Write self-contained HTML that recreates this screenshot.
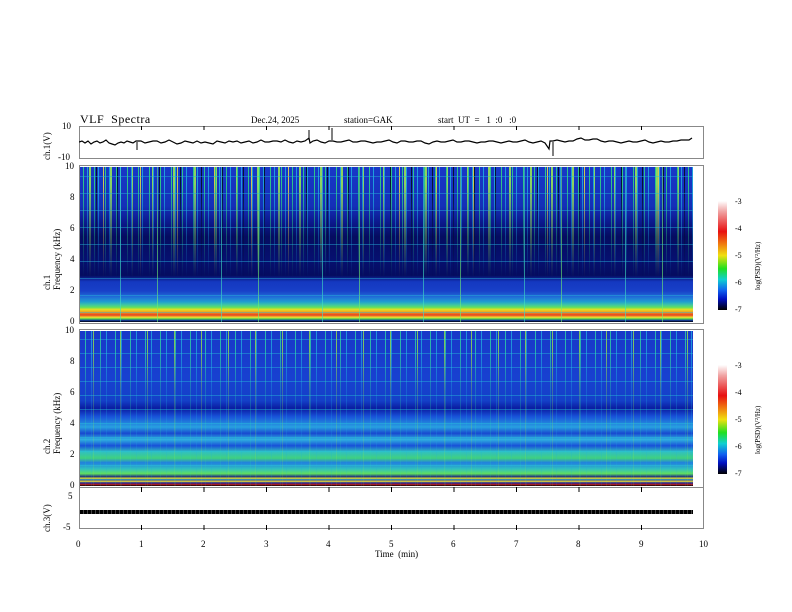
<!DOCTYPE html>
<html><head><meta charset="utf-8"><style>
body{margin:0;width:792px;height:612px;background:#fff;position:relative;overflow:hidden;font-family:"Liberation Serif",serif;color:#000}
.t{position:absolute;font-size:9px;white-space:nowrap}
.frame{position:absolute;left:79px;width:625px;border:1px solid #888;box-sizing:border-box}
.sp{position:absolute;left:80px;width:613px}
.cb{position:absolute;left:718px;width:9px}
</style></head><body>
<div class="t" style="left:80px;top:112px;font-size:12px;letter-spacing:.5px">VLF&nbsp; Spectra</div>
<div class="t" style="left:251px;top:115px">Dec.24, 2025</div>
<div class="t" style="left:344px;top:115px">station=GAK</div>
<div class="t" style="left:438px;top:115px">start&nbsp; UT&nbsp; =&nbsp;&nbsp; 1&nbsp; :0&nbsp;&nbsp; :0</div>

<!-- ch1 -->
<div class="frame" style="top:126px;height:33px"></div>
<div class="t" style="left:62px;top:121px">10</div>
<div class="t" style="left:58px;top:152px">-10</div>
<div class="t" style="left:42px;top:160px;transform:rotate(-90deg);transform-origin:0 0">ch.1(V)</div>
<svg style="position:absolute;left:79px;top:126px" width="626" height="34">
<polyline fill="none" stroke="#000" stroke-width="1.2" points="0,16 3,15 6,17 9,15 12,18 15,16 18,15 21,17 24,16 27,14 30,17 33,18 36,19 39,17 42,16 45,17 48,15 51,16 54,17 57,15 62,15 66,17 70,16 74,15 78,15 82,17 86,16 90,14 94,16 98,18 102,17 106,15 110,16 114,17 118,15 122,17 126,16 130,17 134,18 138,15 142,16 146,17 150,15 154,16 158,15 162,17 166,16 170,15 174,17 178,16 182,14 186,16 190,16 194,15 198,15 202,16 206,14 210,16 214,17 218,15 222,16 226,15 230,12 231,17 234,15 238,14 242,16 246,17 250,15 254,15 258,16 262,16 266,15 270,14 274,16 278,16 282,15 286,15 290,16 294,17 298,16 302,16 306,15 310,14 314,16 318,17 322,15 326,15 330,16 334,16 338,15 342,15 346,17 350,18 354,16 358,15 362,16 366,16 370,15 374,14 378,16 382,16 386,15 390,15 394,16 398,17 402,16 406,16 410,15 414,15 418,16 422,17 426,16 430,15 434,16 438,16 442,15 446,14 450,16 454,17 458,16 462,15 466,17 470,23 471,15 474,15 478,14 482,15 486,16 490,15 494,15 498,13 502,12 506,14 510,14 514,13 518,13 522,15 526,16 530,15 534,15 538,16 542,17 546,16 550,15 554,16 558,16 562,15 566,14 570,16 574,17 578,16 582,15 586,16 590,16 594,15 598,15 602,14 606,14 610,14 613,12"/>
<line x1="230" y1="4" x2="230" y2="14" stroke="#000"/><line x1="253" y1="2" x2="253" y2="14" stroke="#000"/><line x1="58" y1="16" x2="58" y2="24" stroke="#000"/><line x1="474" y1="16" x2="474" y2="30" stroke="#000"/>
<g stroke="#000"><line x1="62.5" y1="0" x2="62.5" y2="4"/><line x1="125" y1="0" x2="125" y2="4"/><line x1="187.5" y1="0" x2="187.5" y2="4"/><line x1="250" y1="0" x2="250" y2="4"/><line x1="312.5" y1="0" x2="312.5" y2="4"/><line x1="375" y1="0" x2="375" y2="4"/><line x1="437.5" y1="0" x2="437.5" y2="4"/><line x1="500" y1="0" x2="500" y2="4"/><line x1="562.5" y1="0" x2="562.5" y2="4"/></g>
</svg>

<!-- spectrogram 1 -->
<div class="frame" style="top:165px;height:159px"></div>
<div class="sp" style="top:167px;height:155px;background:linear-gradient(180deg,#1838c8 0%,#1430b8 25%,#0c1a90 35%,#050c60 45%,#061070 60%,#050c60 70%,#1438c0 74%,#1840c8 80%,#2070d8 84%,#20a0d0 87%,#40c8a0 89%,#60e060 90.5%,#e8e020 92%,#f09020 94%,#e84020 95.5%,#f0e030 97%,#50d050 98%,#1030a0 99%,#000 100%)"></div>
<div class="sp" style="top:167px;height:110px;background:repeating-linear-gradient(90deg,transparent 0 3px,#30e080 3px 4px,transparent 4px 7px,#20b0e0 7px 8px,transparent 8px 11px),repeating-linear-gradient(90deg,transparent 0 9px,#a0f050 9px 11px,transparent 11px 16px,#00101a 16px 17px,transparent 17px 21px),repeating-linear-gradient(90deg,transparent 0 23px,#f0e040 23px 24px,transparent 24px 37px);-webkit-mask-image:linear-gradient(180deg,#000 15%,rgba(0,0,0,.6) 45%,transparent 100%);opacity:.85"></div>
<div class="sp" style="top:167px;height:155px;background:repeating-linear-gradient(90deg,transparent 0 40px,#40e0c0 40px 41px,transparent 41px 77px,#70f070 77px 78px,transparent 78px 101px);opacity:.6"></div>
<div class="sp" style="top:167px;height:155px;background:repeating-linear-gradient(180deg,transparent 0 9px,rgba(40,180,220,.45) 9px 10px,transparent 10px 17px)"></div>
<div style="position:absolute;left:693px;top:166px;width:10px;height:157px;background:#fff"></div>
<div class="t" style="left:65px;top:161px">10</div><div class="t" style="left:70px;top:192px">8</div><div class="t" style="left:70px;top:223px">6</div><div class="t" style="left:70px;top:254px">4</div><div class="t" style="left:70px;top:285px">2</div><div class="t" style="left:70px;top:316px">0</div>
<div class="t" style="left:42px;top:290px;transform:rotate(-90deg);transform-origin:0 0;line-height:10px">ch.1<br>Frequency (kHz)</div>
<div class="cb" style="top:201px;height:109px;background:linear-gradient(180deg,#fff 0%,#f0a0a0 10%,#e81010 28%,#f08010 40%,#f0e010 50%,#20e020 62%,#10d0d0 72%,#1060f0 82%,#0010c0 90%,#000 100%)"></div>
<div class="t" style="left:735px;top:197px;font-size:8px">-3</div><div class="t" style="left:735px;top:224px;font-size:8px">-4</div><div class="t" style="left:735px;top:251px;font-size:8px">-5</div><div class="t" style="left:735px;top:278px;font-size:8px">-6</div><div class="t" style="left:735px;top:305px;font-size:8px">-7</div>
<div class="t" style="left:754px;top:290px;transform:rotate(-90deg);transform-origin:0 0;font-size:7px">log(PSD)(V²/Hz)</div>

<!-- spectrogram 2 -->
<div class="frame" style="top:329px;height:159px"></div>
<div class="sp" style="top:331px;height:155px;background:linear-gradient(180deg,#1838c8 0%,#1840d0 30%,#1440c8 45%,#0a1ca0 50%,#1850d8 55%,#28a0e0 62%,#1848d0 66%,#30b0e0 70%,#1850d8 74%,#30c0c0 78%,#40d080 82%,#2080e0 85%,#30c0c0 89%,#60e060 92%,#203080 94%,#e0e030 95%,#2040a0 96%,#f0e030 97%,#1020a0 98%,#c02020 99%,#000 100%)"></div>
<div class="sp" style="top:331px;height:155px;background:repeating-linear-gradient(90deg,transparent 0 5px,#30e0a0 5px 6px,transparent 6px 11px,#20b0e0 11px 12px,transparent 12px 15px),repeating-linear-gradient(90deg,transparent 0 13px,#a0f040 13px 14px,transparent 14px 27px);-webkit-mask-image:linear-gradient(180deg,#000 10%,rgba(0,0,0,.35) 40%,rgba(0,0,0,.15) 100%);opacity:.75"></div>
<div class="sp" style="top:331px;height:155px;background:repeating-linear-gradient(180deg,transparent 0 8px,rgba(40,200,220,.4) 8px 9px,transparent 9px 14px)"></div>
<div style="position:absolute;left:693px;top:330px;width:10px;height:157px;background:#fff"></div>
<div class="t" style="left:65px;top:325px">10</div><div class="t" style="left:70px;top:356px">8</div><div class="t" style="left:70px;top:387px">6</div><div class="t" style="left:70px;top:418px">4</div><div class="t" style="left:70px;top:449px">2</div><div class="t" style="left:70px;top:480px">0</div>
<div class="t" style="left:42px;top:454px;transform:rotate(-90deg);transform-origin:0 0;line-height:10px">ch.2<br>Frequency (kHz)</div>
<div class="cb" style="top:365px;height:109px;background:linear-gradient(180deg,#fff 0%,#f0a0a0 10%,#e81010 28%,#f08010 40%,#f0e010 50%,#20e020 62%,#10d0d0 72%,#1060f0 82%,#0010c0 90%,#000 100%)"></div>
<div class="t" style="left:735px;top:361px;font-size:8px">-3</div><div class="t" style="left:735px;top:388px;font-size:8px">-4</div><div class="t" style="left:735px;top:415px;font-size:8px">-5</div><div class="t" style="left:735px;top:442px;font-size:8px">-6</div><div class="t" style="left:735px;top:469px;font-size:8px">-7</div>
<div class="t" style="left:754px;top:454px;transform:rotate(-90deg);transform-origin:0 0;font-size:7px">log(PSD)(V²/Hz)</div>

<!-- ch3 -->
<div class="frame" style="top:487px;height:42px"></div>
<div style="position:absolute;left:80px;top:510px;width:613px;height:4px;background:repeating-linear-gradient(90deg,#000 0 3px,#444 3px 4px)"></div>
<div class="t" style="left:68px;top:491px">5</div><div class="t" style="left:63px;top:522px">-5</div>
<div class="t" style="left:42px;top:532px;transform:rotate(-90deg);transform-origin:0 0">ch.3(V)</div>
<svg style="position:absolute;left:79px;top:487px" width="626" height="43">
<g stroke="#000"><line x1="62.5" y1="0" x2="62.5" y2="5"/><line x1="125" y1="0" x2="125" y2="5"/><line x1="187.5" y1="0" x2="187.5" y2="5"/><line x1="250" y1="0" x2="250" y2="5"/><line x1="312.5" y1="0" x2="312.5" y2="5"/><line x1="375" y1="0" x2="375" y2="5"/><line x1="437.5" y1="0" x2="437.5" y2="5"/><line x1="500" y1="0" x2="500" y2="5"/><line x1="562.5" y1="0" x2="562.5" y2="5"/>
<line x1="62.5" y1="38" x2="62.5" y2="43"/><line x1="125" y1="38" x2="125" y2="43"/><line x1="187.5" y1="38" x2="187.5" y2="43"/><line x1="250" y1="38" x2="250" y2="43"/><line x1="312.5" y1="38" x2="312.5" y2="43"/><line x1="375" y1="38" x2="375" y2="43"/><line x1="437.5" y1="38" x2="437.5" y2="43"/><line x1="500" y1="38" x2="500" y2="43"/><line x1="562.5" y1="38" x2="562.5" y2="43"/></g>
</svg>
<div class="t" style="left:76px;top:539px">0</div><div class="t" style="left:139px;top:539px">1</div><div class="t" style="left:201px;top:539px">2</div><div class="t" style="left:264px;top:539px">3</div><div class="t" style="left:326px;top:539px">4</div><div class="t" style="left:389px;top:539px">5</div><div class="t" style="left:451px;top:539px">6</div><div class="t" style="left:514px;top:539px">7</div><div class="t" style="left:576px;top:539px">8</div><div class="t" style="left:639px;top:539px">9</div><div class="t" style="left:699px;top:539px">10</div>
<div class="t" style="left:375px;top:549px">Time&nbsp; (min)</div>
</body></html>
